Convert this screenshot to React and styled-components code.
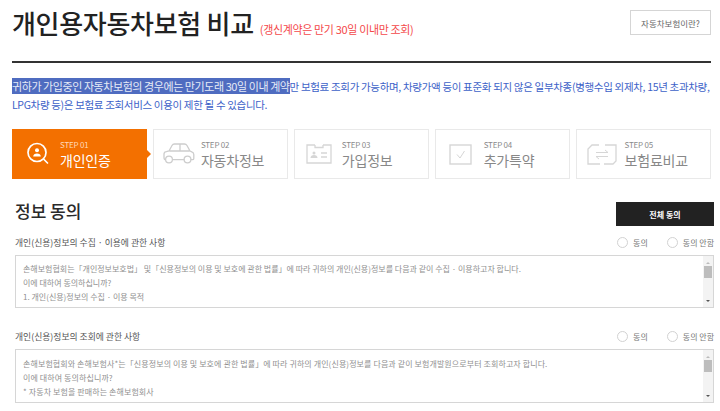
import React from "react";
import styled, { createGlobalStyle } from "styled-components";

const FONT = `"Noto Sans CJK KR", "Noto Sans", sans-serif`;

const Global = createGlobalStyle`
  html, body { margin: 0; padding: 0; background: #fff; overflow: hidden; }
  body { font-family: ${FONT}; width: 720px; height: 411px; }
  * { box-sizing: border-box; }
`;

const Page = styled.div`
  width: 720px;
  height: 411px;
  overflow: hidden;
  padding: 0 6px 0 12px;
`;

const Header = styled.header`
  width: 699px;
  height: 63px;
  border-bottom: 2px solid #333;
  display: flex;
  align-items: flex-start;
  justify-content: space-between;
`;

const TitleGroup = styled.div`
  display: flex;
  align-items: baseline;
  gap: 6px;
  padding-top: 4px;
`;

const Title = styled.h1`
  margin: 0;
  font-size: 26px;
  line-height: 38px;
  font-weight: 500;
  color: #222;
  letter-spacing: -0.3px;
`;

const TitleNote = styled.span`
  font-size: 11px;
  color: #f4484a;
  letter-spacing: -0.35px;
`;

const GhostButton = styled.button`
  width: 81px;
  height: 25px;
  margin-top: 10px;
  padding: 0;
  background: #fff;
  border: 1px solid #d5d5d5;
  font-family: ${FONT};
  font-size: 8.5px;
  color: #666;
`;

const Notice = styled.p`
  width: 702px;
  margin: 15px 0 0;
  font-size: 11px;
  line-height: 17.5px;
  color: #3d62c8;
  letter-spacing: -0.43px;
  white-space: nowrap;
`;

const Selected = styled.span`
  background: #4f6cc0;
  color: #e6ebf7;
`;

const NoticeRest = styled.span`
  font-size: 10.5px;
  letter-spacing: ${p => p.$track}px;
`;

const Steps = styled.ol`
  list-style: none;
  width: 699px;
  height: 50px;
  margin: 16px 0 0;
  padding: 0;
  display: grid;
  grid-template-columns: repeat(5, 135.4px);
  gap: 5.5px;
`;

const Step = styled.li`
  position: relative;
  display: flex;
  align-items: center;
  padding-left: ${p => p.$pad}px;
  gap: ${p => p.$gap}px;
  background: ${p => (p.$active ? "#f37000" : "#fff")};
  border: ${p => (p.$active ? "none" : "1px solid #e9e9e9")};
  color: ${p => (p.$active ? "#fff" : "#888")};
  ${p => p.$active && `
    &::after {
      content: "";
      position: absolute;
      right: -4px;
      top: 21px;
      border-left: 4px solid #f37000;
      border-top: 4px solid transparent;
      border-bottom: 4px solid transparent;
    }
  `}
`;

const StepText = styled.div`
  display: flex;
  flex-direction: column;
  padding-top: 1px;
`;

const StepNum = styled.span`
  font-size: 8px;
  line-height: 11px;
  letter-spacing: -0.2px;
  color: ${p => (p.$active ? "#ffd9b8" : "#8a8a8a")};
`;

const StepName = styled.span`
  font-size: 14px;
  line-height: 21px;
  letter-spacing: -0.2px;
`;

const Section = styled.section`
  width: 699px;
  margin: 23px 0 0 3px;
  display: flex;
  flex-direction: column;
`;

const SectionHead = styled.div`
  display: flex;
  align-items: flex-start;
  justify-content: space-between;
  height: 24px;
`;

const SectionTitle = styled.h2`
  margin: 0;
  font-size: 17px;
  font-weight: 500;
  line-height: 18px;
  color: #2a2a2a;
`;

const DarkButton = styled.button`
  width: 98px;
  height: 24px;
  padding: 0;
  border: none;
  background: #222;
  color: #fff;
  font-family: ${FONT};
  font-size: 8px;
  font-weight: 700;
`;

const Consent = styled.div`
  margin-top: ${p => p.$top}px;
`;

const ConsentHead = styled.div`
  display: flex;
  align-items: center;
  justify-content: space-between;
  height: 16px;
  margin-bottom: 5px;
`;

const ConsentLabel = styled.span`
  font-size: 8.8px;
  color: #555;
`;

const Radios = styled.div`
  display: flex;
  align-items: center;
  gap: 19px;
`;

const RadioItem = styled.label`
  display: flex;
  align-items: center;
  gap: 5px;
  font-size: 8px;
  color: #777;
`;

const RadioDot = styled.span`
  width: 11px;
  height: 11px;
  border: 1px solid #d2d2d2;
  border-radius: 50%;
  background: #fff;
`;

const TermsBox = styled.div`
  position: relative;
  height: ${p => p.$h}px;
  border: 1px solid #d6d6d6;
  padding: ${p => p.$pad}px 0 0 7px;
  font-size: 8px;
  line-height: 14px;
  letter-spacing: ${p => p.$track}px;
  color: #909090;
  white-space: nowrap;
  overflow: hidden;
`;

const TermsLine = styled.div``;

const Scrollbar = styled.div`
  position: absolute;
  right: 0;
  top: 0;
  bottom: 0;
  width: 10px;
  background: #f3f3f3;
  display: flex;
  flex-direction: column;
  justify-content: space-between;
  align-items: center;
  padding: 6px 0 5px;
`;

const Thumb = styled.div`
  position: absolute;
  left: 1px;
  top: 10px;
  width: 8px;
  height: 12px;
  background: #bdbdbd;
`;

const ArrowUp = styled.i`
  border-left: 2px solid transparent;
  border-right: 2px solid transparent;
  border-bottom: 2px solid #bbb;
`;

const ArrowDown = styled.i`
  border-left: 2px solid transparent;
  border-right: 2px solid transparent;
  border-top: 2px solid #555;
`;

const AuthIcon = () => (
  <svg width="24" height="24" viewBox="0 0 24 24" fill="none" stroke="#fff" strokeWidth="1.7">
    <circle cx="11" cy="10.5" r="9" />
    <path d="M18 17.5l3.5 3.5" strokeLinecap="round" />
    <circle cx="11" cy="8.2" r="2" fill="#fff" stroke="none" />
    <path d="M7.2 14.5c0-2 1.6-3 3.8-3s3.8 1 3.8 3z" fill="#fff" stroke="none" />
  </svg>
);

const CarIcon = () => (
  <svg width="33" height="22" viewBox="0 0 33 22" fill="none" stroke="#cdcdcd" strokeWidth="1.3">
    <path d="M2 14.5V11c0-1.3 1-2.2 2.3-2.4L7 8l3-5.5c.5-.9 1.2-1.500 2.400-1.500h10c1.200 0 2 .5 2.600 1.500L28 8l1.800.8c1.200.5 2 1.400 2 2.700v4c0 .8-.5 1.200-1.200 1.200h-1.800M7.500 8h20M18 1.500V8M10.500 16.700h12M2 14.500c0 1.500.6 2.200 1.800 2.200" />
    <circle cx="7" cy="16.500" r="3.400" />
    <circle cx="25.500" cy="16.500" r="3.400" />
  </svg>
);

const IdIcon = () => (
  <svg width="26" height="20" viewBox="0 0 26 20" fill="none" stroke="#d6d6d6" strokeWidth="1.300">
    <path d="M9 1H1v18h24V1h-8M9 1v2.500h8V1" />
    <circle cx="8" cy="9" r="1.500" fill="#d6d6d6" stroke="none" />
    <path d="M4.500 14c0-2 1.500-3 3.500-3s3.500 1 3.500 3z" fill="#d6d6d6" stroke="none" />
    <path d="M15 9h6M15 13h6" />
  </svg>
);

const CheckIcon = () => (
  <svg width="23" height="21" viewBox="0 0 23 21" fill="none" stroke="#d6d6d6" strokeWidth="1.400">
    <rect x="1" y="1" width="21" height="19" />
    <path d="M8 10.500l3 3.500 4.500-7" strokeWidth="1" />
  </svg>
);

const SwapIcon = () => (
  <svg width="30" height="21" viewBox="0 0 30 21" fill="none" stroke="#d6d6d6" strokeWidth="1.300">
    <path d="M12 1H5L1 5v15h12M18 1h11v16l-3 3h-9" />
    <path d="M9 8.500h12l-3-2.500M21 12.500H9l3 2.500" strokeWidth="1" />
  </svg>
);

const steps = [
  { num: "STEP 01", name: "개인인증", Icon: AuthIcon, pad: 14, gap: 10, active: true },
  { num: "STEP 02", name: "자동차정보", Icon: CarIcon, pad: 8, gap: 6 },
  { num: "STEP 03", name: "가입정보", Icon: IdIcon, pad: 11, gap: 10 },
  { num: "STEP 04", name: "추가특약", Icon: CheckIcon, pad: 13, gap: 12 },
  { num: "STEP 05", name: "보험료비교", Icon: SwapIcon, pad: 10, gap: 8 },
];

const consents = [
  {
    label: "개인(신용)정보의 수집 · 이용에 관한 사항",
    top: 8,
    h: 53,
    pad: 6,
    track: 0,
    lines: [
      "손해보험협회는「개인정보보호법」 및「신용정보의 이용 및 보호에 관한 법률」에 따라 귀하의 개인(신용)정보를 다음과 같이 수집 · 이용하고자 합니다.",
      "이에 대하여 동의하십니까?",
      "1. 개인(신용)정보의 수집 · 이용 목적",
    ],
  },
  {
    label: "개인(신용)정보의 조회에 관한 사항",
    top: 20,
    h: 54,
    pad: 7,
    track: 0.1,
    lines: [
      "손해보험협회와 손해보험사*는「신용정보의 이용 및 보호에 관한 법률」에 따라 귀하의 개인(신용)정보를 다음과 같이 보험개발원으로부터 조회하고자 합니다.",
      "이에 대하여 동의하십니까?",
      "* 자동차 보험을 판매하는 손해보험회사",
    ],
  },
];

export default function App() {
  return (
    <Page>
      <Global />
      <Header>
        <TitleGroup>
          <Title>개인용자동차보험 비교</Title>
          <TitleNote>(갱신계약은 만기 30일 이내만 조회)</TitleNote>
        </TitleGroup>
        <GhostButton>자동차보험이란?</GhostButton>
      </Header>
      <Notice>
        <Selected>귀하가 가입중인 자동차보험의 경우에는 만기도래 30일 이내 계약</Selected>
        <NoticeRest $track={-0.32}>만 보험료 조회가 가능하며, 차량가액 등이 표준화 되지 않은 일부차종(병행수입 외제차, 15년 초과차량,</NoticeRest>
        <br />
        <NoticeRest $track={-0.33}>LPG차량 등)은 보험료 조회서비스 이용이 제한 될 수 있습니다.</NoticeRest>
      </Notice>
      <Steps>
        {steps.map(({ num, name, Icon, pad, gap, active }) => (
          <Step key={num} $active={active} $pad={pad} $gap={gap}>
            <Icon />
            <StepText>
              <StepNum $active={active}>{num}</StepNum>
              <StepName>{name}</StepName>
            </StepText>
          </Step>
        ))}
      </Steps>
      <Section>
        <SectionHead>
          <SectionTitle>정보 동의</SectionTitle>
          <DarkButton>전체 동의</DarkButton>
        </SectionHead>
        {consents.map(c => (
          <Consent key={c.label} $top={c.top}>
            <ConsentHead>
              <ConsentLabel>{c.label}</ConsentLabel>
              <Radios>
                <RadioItem><RadioDot />동의</RadioItem>
                <RadioItem><RadioDot />동의 안함</RadioItem>
              </Radios>
            </ConsentHead>
            <TermsBox $h={c.h} $pad={c.pad} $track={c.track}>
              {c.lines.map(l => <TermsLine key={l}>{l}</TermsLine>)}
              <Scrollbar>
                <ArrowUp />
                <Thumb />
                <ArrowDown />
              </Scrollbar>
            </TermsBox>
          </Consent>
        ))}
      </Section>
    </Page>
  );
}
